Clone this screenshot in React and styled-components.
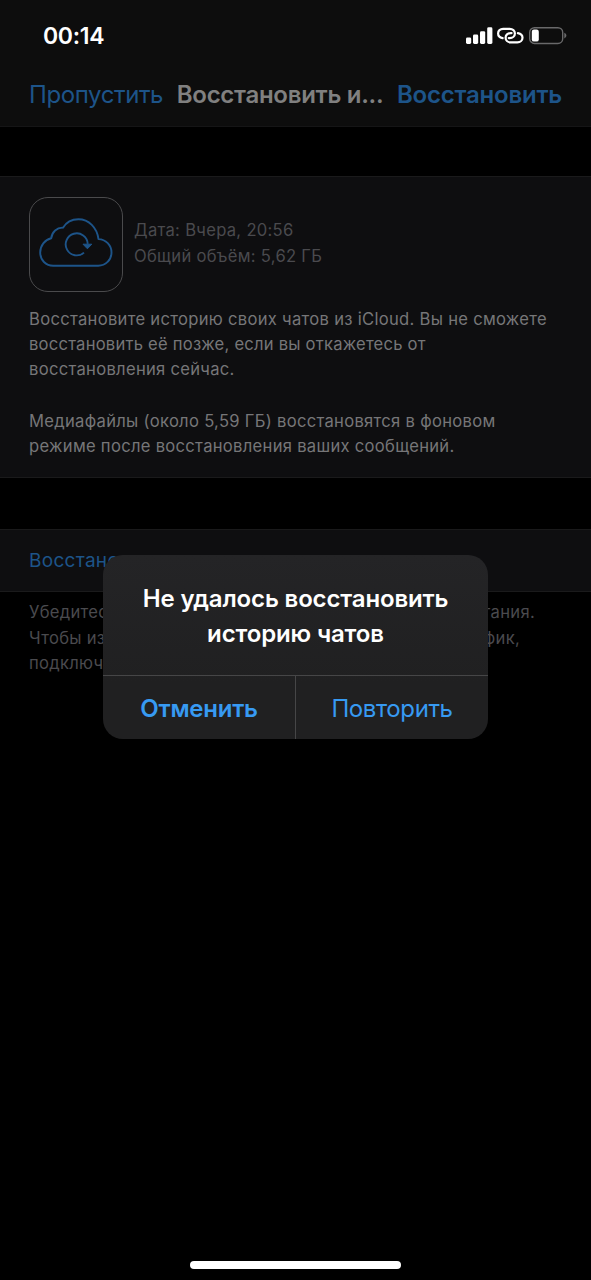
import React from 'react'
import styled, { createGlobalStyle } from 'styled-components'

const GlobalStyle = createGlobalStyle`
* {
    box-sizing: border-box;
    margin: 0;
    padding: 0;
}

body {
    background-color: #000;
    font-family: Inter, "Liberation Sans", sans-serif;
    overflow: hidden;
}

button {
    border: none;
    background: none;
    font-family: inherit;
    cursor: pointer;
}
`

const Screen = styled.main`
    position: relative;
    width: 591px;
    height: 1280px;
    display: flex;
    flex-direction: column;
    background-color: #000;
    overflow: hidden;
`

const Header = styled.header`
    height: 127px;
    background-color: #0d0d0d;
    border-bottom: 1px solid #151516;
`

const StatusBar = styled.div`
    height: 64px;
    padding: 7px 24px 0 43px;
    display: flex;
    align-items: center;
    justify-content: space-between;
`

const Time = styled.time`
    color: #fff;
    font-size: 23px;
    font-weight: 600;
    letter-spacing: -.3px;
`

const StatusIcons = styled.div`
    display: flex;
    align-items: center;
    gap: 4px;

    svg {
        display: block;
    }
`

const NavBar = styled.nav`
    height: 60px;
    padding: 0 29px;
    display: flex;
    align-items: center;
    justify-content: space-between;
`

const NavButton = styled.button`
    color: #1d5489;
    font-size: 24px;
    font-weight: ${({ $bold }) => ($bold ? 600 : 400)};
    letter-spacing: ${({ $bold }) => ($bold ? -.22 : -.4)}px;
    white-space: nowrap;
`

const NavTitle = styled.h1`
    color: #808080;
    font-size: 24px;
    font-weight: 600;
    letter-spacing: -.28px;
    white-space: nowrap;
`

const Section = styled.section`
    margin-top: ${({ $top }) => $top}px;
    height: ${({ $height }) => $height}px;
    padding: ${({ $pad }) => $pad};
    background-color: #0e0e10;
    border-top: 1px solid #1a1a1b;
    border-bottom: 1px solid #1a1a1b;
`

const BackupInfo = styled.div`
    display: flex;
    gap: 11px;
`

const CloudTile = styled.div`
    width: 94px;
    height: 95px;
    border: 1px solid #4a4a4c;
    border-radius: 19px;
    flex-shrink: 0;

    svg {
        display: block;
    }
`

const Details = styled.div`
    padding-top: 20px;
    color: #4a4a4e;
    font-size: 16.6px;
    line-height: 26px;
    letter-spacing: .29px;
`

const Paragraph = styled.p`
    margin-top: ${({ $top }) => $top}px;
    color: #767678;
    font-size: 16.6px;
    line-height: ${({ $leading }) => $leading || 25.2}px;
    letter-spacing: .29px;
    white-space: nowrap;
`

const Line = styled.span`
    display: flex;
    justify-content: space-between;
    width: ${({ $width }) => ($width ? `${$width}px` : 'auto')};
    letter-spacing: ${({ $spacing }) => ($spacing ? `${$spacing}px` : 'inherit')};
`

const RowButton = styled.button`
    color: #1d5489;
    font-size: 19px;
    letter-spacing: .3px;
`

const Footnote = styled(Paragraph)`
    padding-left: 29px;
    color: #4a4a4e;
`

const Overlay = styled.div`
    position: absolute;
    inset: 0;
    padding-top: 14px;
    display: flex;
    align-items: center;
    justify-content: center;
`

const Dialog = styled.div`
    width: 385px;
    height: 184px;
    display: flex;
    flex-direction: column;
    border-radius: 20px;
    background: linear-gradient(#242426, #202021 70%);
    overflow: hidden;
`

const DialogTitle = styled.h2`
    height: 120px;
    padding-top: 26px;
    color: #fff;
    font-size: 24px;
    font-weight: 600;
    line-height: 35px;
    letter-spacing: -.15px;
    text-align: center;
    white-space: nowrap;
`

const DialogActions = styled.div`
    flex: 1;
    display: grid;
    grid-template-columns: 192px 1fr;
    border-top: 1px solid #464647;
`

const DialogButton = styled.button`
    padding-top: 1px;
    color: #379af2;
    font-size: 24px;
    font-weight: ${({ $bold }) => ($bold ? 600 : 400)};
    letter-spacing: ${({ $bold }) => ($bold ? -.25 : -.4)}px;

    & + & {
        border-left: 1px solid #464647;
    }
`

const HomeIndicator = styled.div`
    position: absolute;
    left: 190px;
    bottom: 11px;
    width: 211px;
    height: 8px;
    border-radius: 4px;
    background-color: #fff;
`

const SignalIcon = () => (
    <svg width="28" height="18" viewBox="0 0 28 18" fill="#fff">
        <rect x="1" y="10.6" width="5.2" height="6.4" rx="1.4" />
        <rect x="8" y="7.6" width="5.2" height="9.4" rx="1.4" />
        <rect x="15" y="4.2" width="5.2" height="12.8" rx="1.4" />
        <rect x="22.2" y=".3" width="5.2" height="16.7" rx="1.4" />
    </svg>
)

const HotspotIcon = () => (
    <svg width="28" height="18" viewBox="0 0 28 18" fill="none" stroke="#fff" strokeWidth="2.2" strokeLinecap="round">
        <path d="M5.6 11.2C2.8 10.6 1.1 8.7 1.1 6.5C1.1 3.8 3.2 1.8 6.1 1.8H12.7C15.7 1.8 17.9 3.8 17.9 6.5C17.9 9.1 15.7 11.1 12.7 11.1H11.8" />
        <path d="M20.9 6.1C23.8 6.6 25.5 8.4 25.5 10.7C25.5 13.4 23.3 15.4 20.4 15.4H13.7C10.7 15.4 8.6 13.4 8.6 10.7C8.6 8.1 10.7 6.1 13.7 6.1H14.6" />
    </svg>
)

const BatteryIcon = () => (
    <svg width="38" height="18" viewBox="0 0 38 18">
        <rect x=".7" y=".7" width="33" height="15.8" rx="4.8" fill="none" stroke="#69696a" strokeWidth="1.4" />
        <path d="M35.3 5.8C36.7 6.4 37.4 7.4 37.4 8.6C37.4 9.8 36.7 10.8 35.3 11.4Z" fill="#69696a" />
        <rect x="2.8" y="2.6" width="7" height="12" rx="2.2" fill="#fff" />
    </svg>
)

const CloudIcon = () => (
    <svg width="92" height="93" viewBox="0 0 92 93" fill="none" stroke="#1d5489" strokeWidth="1.9" strokeLinejoin="round">
        <path d="M23.2 67.8C15.9 67.8 10.2 62 10.2 54.5C10.2 47.5 14.8 41.7 21.2 40.3C21.9 34 27 29.3 33 29.7C36.2 24.3 42 21.2 48.4 21.2C58.8 21.2 67 29.5 68.5 41.1C75.8 41.3 81.5 47.2 81.5 54.4C81.5 62 75.6 67.8 68.2 67.8Z" />
        <path d="M54 54.6A11 11 0 1 1 57.7 45.9" />
        <path d="M53 46.2H61.8L57.4 50.8Z" fill="#1d5489" strokeWidth="1" />
    </svg>
)

const App = () => {
    return (
        <Screen>
            <GlobalStyle />
            <Header>
                <StatusBar>
                    <Time>00:14</Time>
                    <StatusIcons>
                        <SignalIcon />
                        <HotspotIcon />
                        <BatteryIcon />
                    </StatusIcons>
                </StatusBar>
                <NavBar>
                    <NavButton>Пропустить</NavButton>
                    <NavTitle>Восстановить и...</NavTitle>
                    <NavButton $bold>Восстановить</NavButton>
                </NavBar>
            </Header>

            <Section $top={49} $height={302} $pad="20px 29px 0">
                <BackupInfo>
                    <CloudTile>
                        <CloudIcon />
                    </CloudTile>
                    <Details>
                        <p>Дата: Вчера, 20:56</p>
                        <p>Общий объём: 5,62 ГБ</p>
                    </Details>
                </BackupInfo>
                <Paragraph $top={15}>
                    <Line>Восстановите историю своих чатов из iCloud. Вы не сможете</Line>
                    <Line $spacing={.22}>восстановить её позже, если вы откажетесь от</Line>
                    <Line>восстановления сейчас.</Line>
                </Paragraph>
                <Paragraph $top={26}>
                    <Line>Медиафайлы (около 5,59 ГБ) восстановятся в фоновом</Line>
                    <Line>режиме после восстановления ваших сообщений.</Line>
                </Paragraph>
            </Section>

            <Section $top={51} $height={63} $pad="19px 29px 0">
                <RowButton>Восстановить</RowButton>
            </Section>
            <Footnote $top={8} $leading={25.6}>
                <Line $width={506}>
                    <span>Убедитесь,</span>
                    <span>питания.</span>
                </Line>
                <Line $width={491}>
                    <span>Чтобы избежать</span>
                    <span>трафик,</span>
                </Line>
                <Line>подключитесь</Line>
            </Footnote>

            <Overlay>
                <Dialog role="alertdialog">
                    <DialogTitle>
                        Не удалось восстановить<br />историю чатов
                    </DialogTitle>
                    <DialogActions>
                        <DialogButton $bold>Отменить</DialogButton>
                        <DialogButton>Повторить</DialogButton>
                    </DialogActions>
                </Dialog>
            </Overlay>
            <HomeIndicator />
        </Screen>
    )
}

export default App
